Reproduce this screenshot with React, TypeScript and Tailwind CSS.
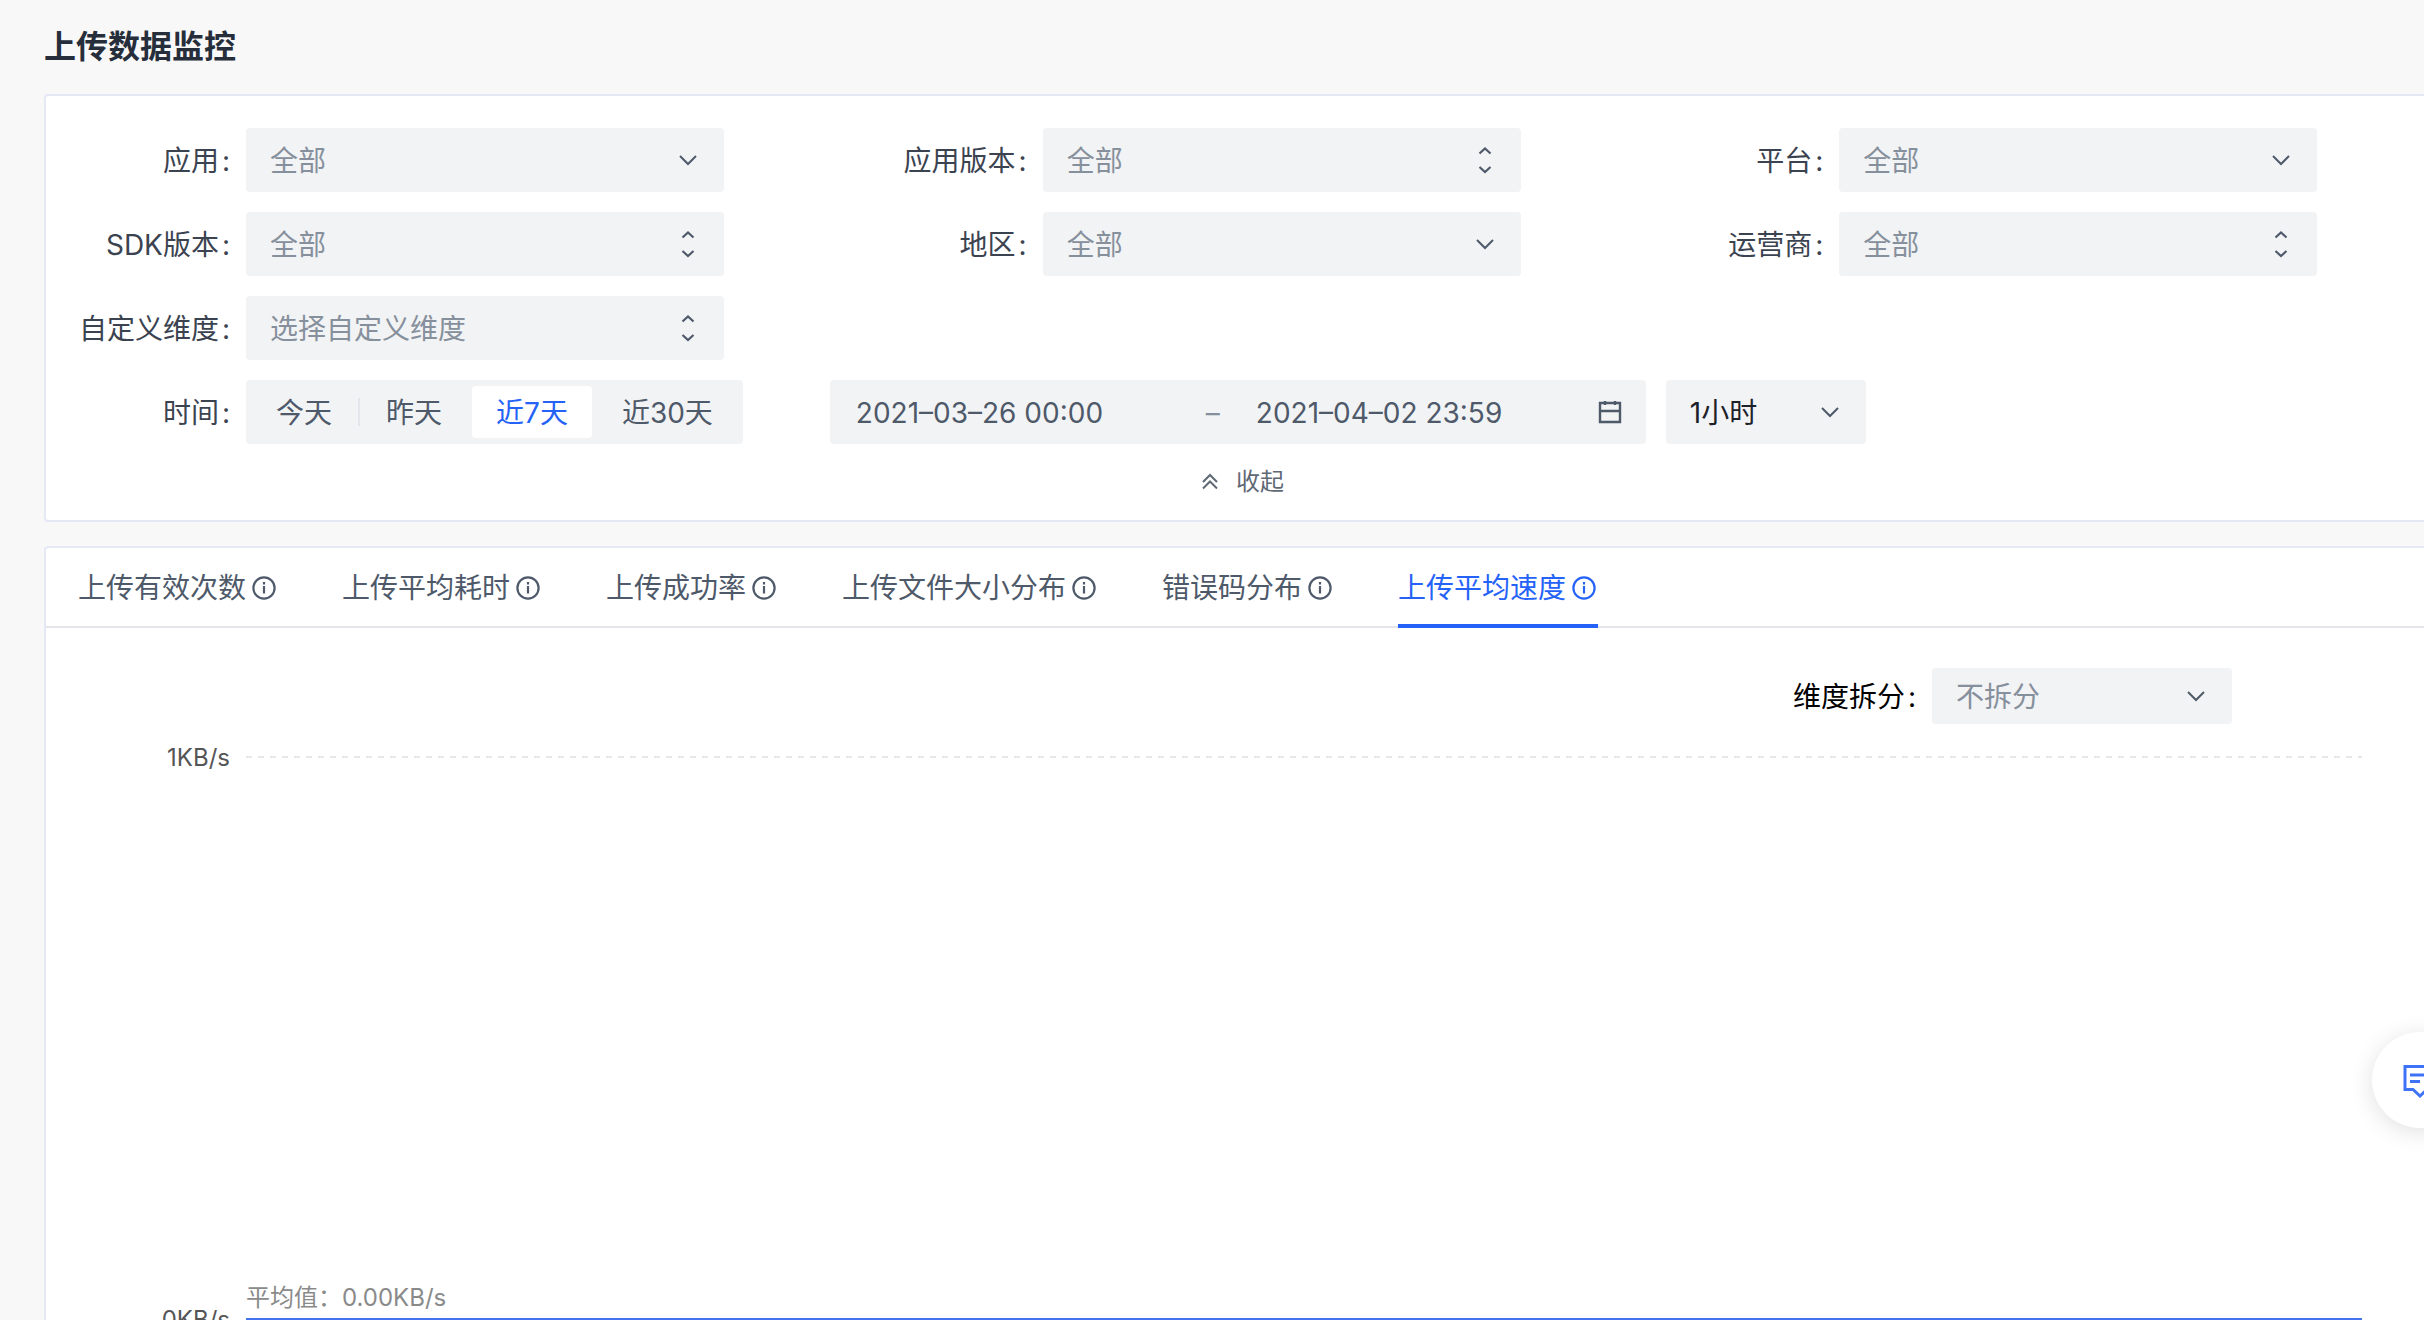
import React from "react";

type FieldProps = { id: string; label: string; value: string; multi?: boolean };

const ChevronIcon = () => (
  <svg className="pointer-events-none size-6" viewBox="0 0 24 24" fill="none" stroke="#4e5969" strokeWidth="2">
    <path d="M4 8l8 8 8-8" />
  </svg>
);

const UpDownIcon = () => (
  <svg className="pointer-events-none h-8 w-6" viewBox="0 0 24 32" fill="none" stroke="#4e5969" strokeWidth="2.2">
    <path d="M6.500 9.500l5.500-5 5.500 5M6.500 23l5.500 5 5.500-5" />
  </svg>
);

const InfoIcon = () => (
  <svg className="size-6" viewBox="0 0 24 24" fill="none" stroke="currentColor" strokeWidth="2.2">
    <circle cx="12" cy="12" r="10.600" />
    <path d="M12 10V17.500M12 6v2.500" />
  </svg>
);

const CalendarIcon = () => (
  <svg className="size-6" viewBox="0 0 24 24" fill="none" stroke="#4e5969" strokeWidth="2.400">
    <path d="M2 3h20v19H2zM2 11h20M7 1v4M17 1v4" />
  </svg>
);

type SelectProps = { id: string; value: string; multi?: boolean; size: string; tone: string; name?: string };

function Select({ id, value, multi, size, tone, name }: SelectProps) {
  return (
    <div className={`relative flex items-center rounded-sm bg-[#f2f3f5] ${size}`}>
      <select
        id={id}
        aria-label={name}
        className={`h-full w-full appearance-none bg-transparent px-6 pt-0.5 outline-none ${tone}`}
      >
        <option>{value}</option>
      </select>
      <span className="pointer-events-none absolute right-6">{multi ? <UpDownIcon /> : <ChevronIcon />}</span>
    </div>
  );
}

function Field({ id, label, value, multi }: FieldProps) {
  return (
    <div className="flex items-center gap-4">
      <label htmlFor={id} className="flex w-38 shrink-0 justify-end gap-[3px] pt-0.5 whitespace-nowrap">
        {label}
        <span>:</span>
      </label>
      <Select id={id} value={value} multi={multi} size="h-16 w-[478px]" tone="text-[#86909c]" />
    </div>
  );
}

const fields: FieldProps[] = [
  { id: "app", label: "应用", value: "全部" },
  { id: "app-version", label: "应用版本", value: "全部", multi: true },
  { id: "platform", label: "平台", value: "全部" },
  { id: "sdk-version", label: "SDK版本", value: "全部", multi: true },
  { id: "region", label: "地区", value: "全部" },
  { id: "carrier", label: "运营商", value: "全部", multi: true },
  { id: "dimension", label: "自定义维度", value: "选择自定义维度", multi: true },
];

const ranges = ["今天", "昨天", "近7天", "近30天"];
const tabs = ["上传有效次数", "上传平均耗时", "上传成功率", "上传文件大小分布", "错误码分布", "上传平均速度"];

export default function App() {
  return (
    <div className="relative h-screen overflow-hidden bg-[#f8f8f8] pl-11 font-['Inter','Noto_Sans_CJK_SC',sans-serif] text-[28px] leading-10 text-[#3b4350]">
      <main className="-mr-5">
        <h1 className="pt-[23px] pb-[23px] text-[32px] leading-12 font-bold text-[#272e3b]">上传数据监控</h1>

        <section className="rounded-sm border-2 border-[#e5e8f5] bg-white pt-8 pb-[18px] pl-8">
          <div className="-mr-[26px] grid grid-cols-3 gap-y-5">
            {fields.map((f) => (
              <Field key={f.id} {...f} />
            ))}
          </div>
          <div className="mt-5 flex items-center">
            <span id="time-label" className="mr-4 flex w-38 justify-end gap-[3px] pt-0.5">
              时间<span>:</span>
            </span>
            <div
              role="group"
              aria-labelledby="time-label"
              className="flex h-16 gap-1.5 rounded-sm bg-[#f2f3f5] p-1.5 text-[#4e5969]"
            >
              {ranges.map((r, i) => (
                <button
                  key={r}
                  type="button"
                  aria-pressed={i === 2}
                  className={`relative rounded-sm px-6 pt-0.5 whitespace-nowrap ${i === 2 ? "bg-white text-[#2563f8]" : ""}`}
                >
                  {r}
                  {i === 0 && <span className="absolute top-3 -right-1 h-7 w-0.5 bg-[#e5e6eb]" />}
                </button>
              ))}
            </div>
            <div className="ml-[87px] flex h-16 w-[816px] items-center rounded-sm bg-[#f2f3f5] pr-6 pl-[26px] text-[#4e5969]">
              <input aria-label="开始时间" defaultValue="2021–03–26 00:00" className="w-[350px] bg-transparent pt-0.5 outline-none" />
              <span className="w-[50px] pt-0.5 text-[#86909c]">–</span>
              <input aria-label="结束时间" defaultValue="2021–04–02 23:59" className="min-w-0 flex-1 bg-transparent pt-0.5 outline-none" />
              <button type="button" aria-label="选择日期">
                <CalendarIcon />
              </button>
            </div>
            <div className="ml-5">
              <Select id="granularity" name="时间粒度" value="1小时" size="h-16 w-[200px]" tone="text-[#1d2129]" />
            </div>
          </div>
          <div className="mt-[18px] mr-1 -ml-8 flex justify-center">
            <button type="button" className="flex items-center gap-4 text-2xl leading-10 text-[#5f6875]">
              <svg className="size-5" viewBox="0 0 20 20" fill="none" stroke="currentColor" strokeWidth="2">
                <path d="M3 10l7-7 7 7M3 16.500l7-7 7 7" />
              </svg>
              收起
            </button>
          </div>
        </section>

        <section className="mt-6 rounded-sm border-2 border-[#e5e8f5] bg-white">
          <div role="tablist" className="flex h-20 gap-16 border-b-2 border-[#e5e6eb] px-8 text-[#4e5969]">
            {tabs.map((t, i) => (
              <button
                key={t}
                type="button"
                role="tab"
                aria-selected={i === 5}
                className={`-mb-0.5 flex items-center gap-1.5 border-b-4 pt-1 pr-0.5 whitespace-nowrap ${
                  i === 5 ? "border-[#2563f8] text-[#2563f8]" : "border-transparent"
                }`}
              >
                {t}
                <InfoIcon />
              </button>
            ))}
          </div>
          <div className="flex items-center justify-end gap-4 pt-10 pr-[210px]">
            <label htmlFor="split" className="flex gap-[3px] pt-0.5 text-black">
              维度拆分<span>:</span>
            </label>
            <Select id="split" value="不拆分" size="h-14 w-[300px]" tone="text-[#86909c]" />
          </div>
          <div className="mt-4 flex pr-20 text-2xl leading-8 text-[#555]">
            <div className="mr-4 flex h-[596px] w-[184px] flex-col justify-between pt-0.5 text-right">
              <span>1KB/s</span>
              <span>0KB/s</span>
            </div>
            <div className="flex h-[580px] flex-1 flex-col justify-between pt-4">
              <svg className="h-0.5 w-full" aria-hidden="true">
                <line x1="0" y1="1" x2="100%" y2="1" stroke="#e8e8e8" strokeWidth="2" strokeDasharray="6 6" />
              </svg>
              <div className="border-b-2 border-[#4373ef] pb-1 text-[#8a8a8a]">平均值：0.00KB/s</div>
            </div>
          </div>
        </section>
      </main>

      <button
        type="button"
        aria-label="反馈"
        className="absolute top-[1032px] -right-11 flex size-24 items-center justify-center rounded-full bg-white shadow-[0_4px_24px_rgba(0,0,0,0.12)]"
      >
        <svg className="size-9" viewBox="0 0 36 36" fill="none" stroke="#3f73f7" strokeWidth="3">
          <path d="M3 4.500h30v23h-8l-7 6.500-7-6.500H3zM8 13h20M8 19.500h10" />
        </svg>
      </button>
    </div>
  );
}
